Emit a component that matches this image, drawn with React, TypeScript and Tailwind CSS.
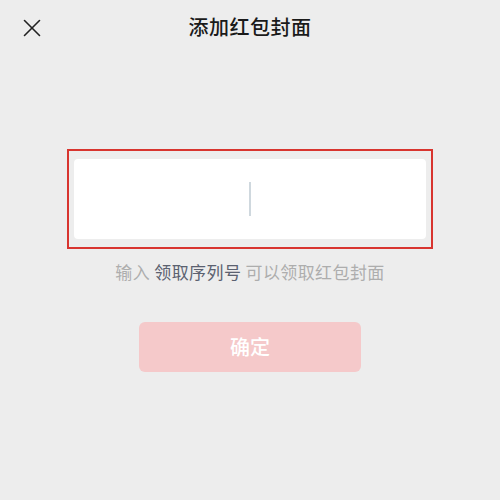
import { X } from "lucide-react";

export default function App(): JSX.Element {
  return (
    <div
      className="flex h-[500px] w-[500px] flex-col bg-[#ededed] text-[#1a1a1a]"
      style={{ fontFamily: '"Noto Sans CJK SC", "Noto Sans", sans-serif' }}
    >
      <header className="grid h-[54px] grid-cols-[80px_1fr_80px] items-center">
        <span className="flex pl-[17px] pt-[1px]">
          <X className="h-[30px] w-[30px] text-[#222]" strokeWidth={1.3} aria-hidden="true" />
        </span>
        <h1 className="text-center text-[20px] font-medium leading-none tracking-[0.5px]">添加红包封面</h1>
        <span />
      </header>

      <div className="mx-auto mt-[95px] h-[100px] w-[366px] border-2 border-[#d8352f] px-[5px] py-[8px]">
        <div className="flex h-full items-center justify-center rounded-[4px] bg-white">
          <span className="h-[34px] w-[2px] bg-[#cfd8de]" />
        </div>
      </div>

      <p className="mt-[12px] text-center text-[17px] leading-[22px] tracking-[0.4px] text-[#adadad]">
        输入 <span className="text-[#5b6170]">领取序列号</span> 可以领取红包封面
      </p>

      <button
        type="button"
        className="mx-auto mt-[39px] h-[50px] w-[222px] rounded-[6px] bg-[#f5c9ca] text-[20px] font-medium text-white"
      >
        确定
      </button>
    </div>
  );
}
